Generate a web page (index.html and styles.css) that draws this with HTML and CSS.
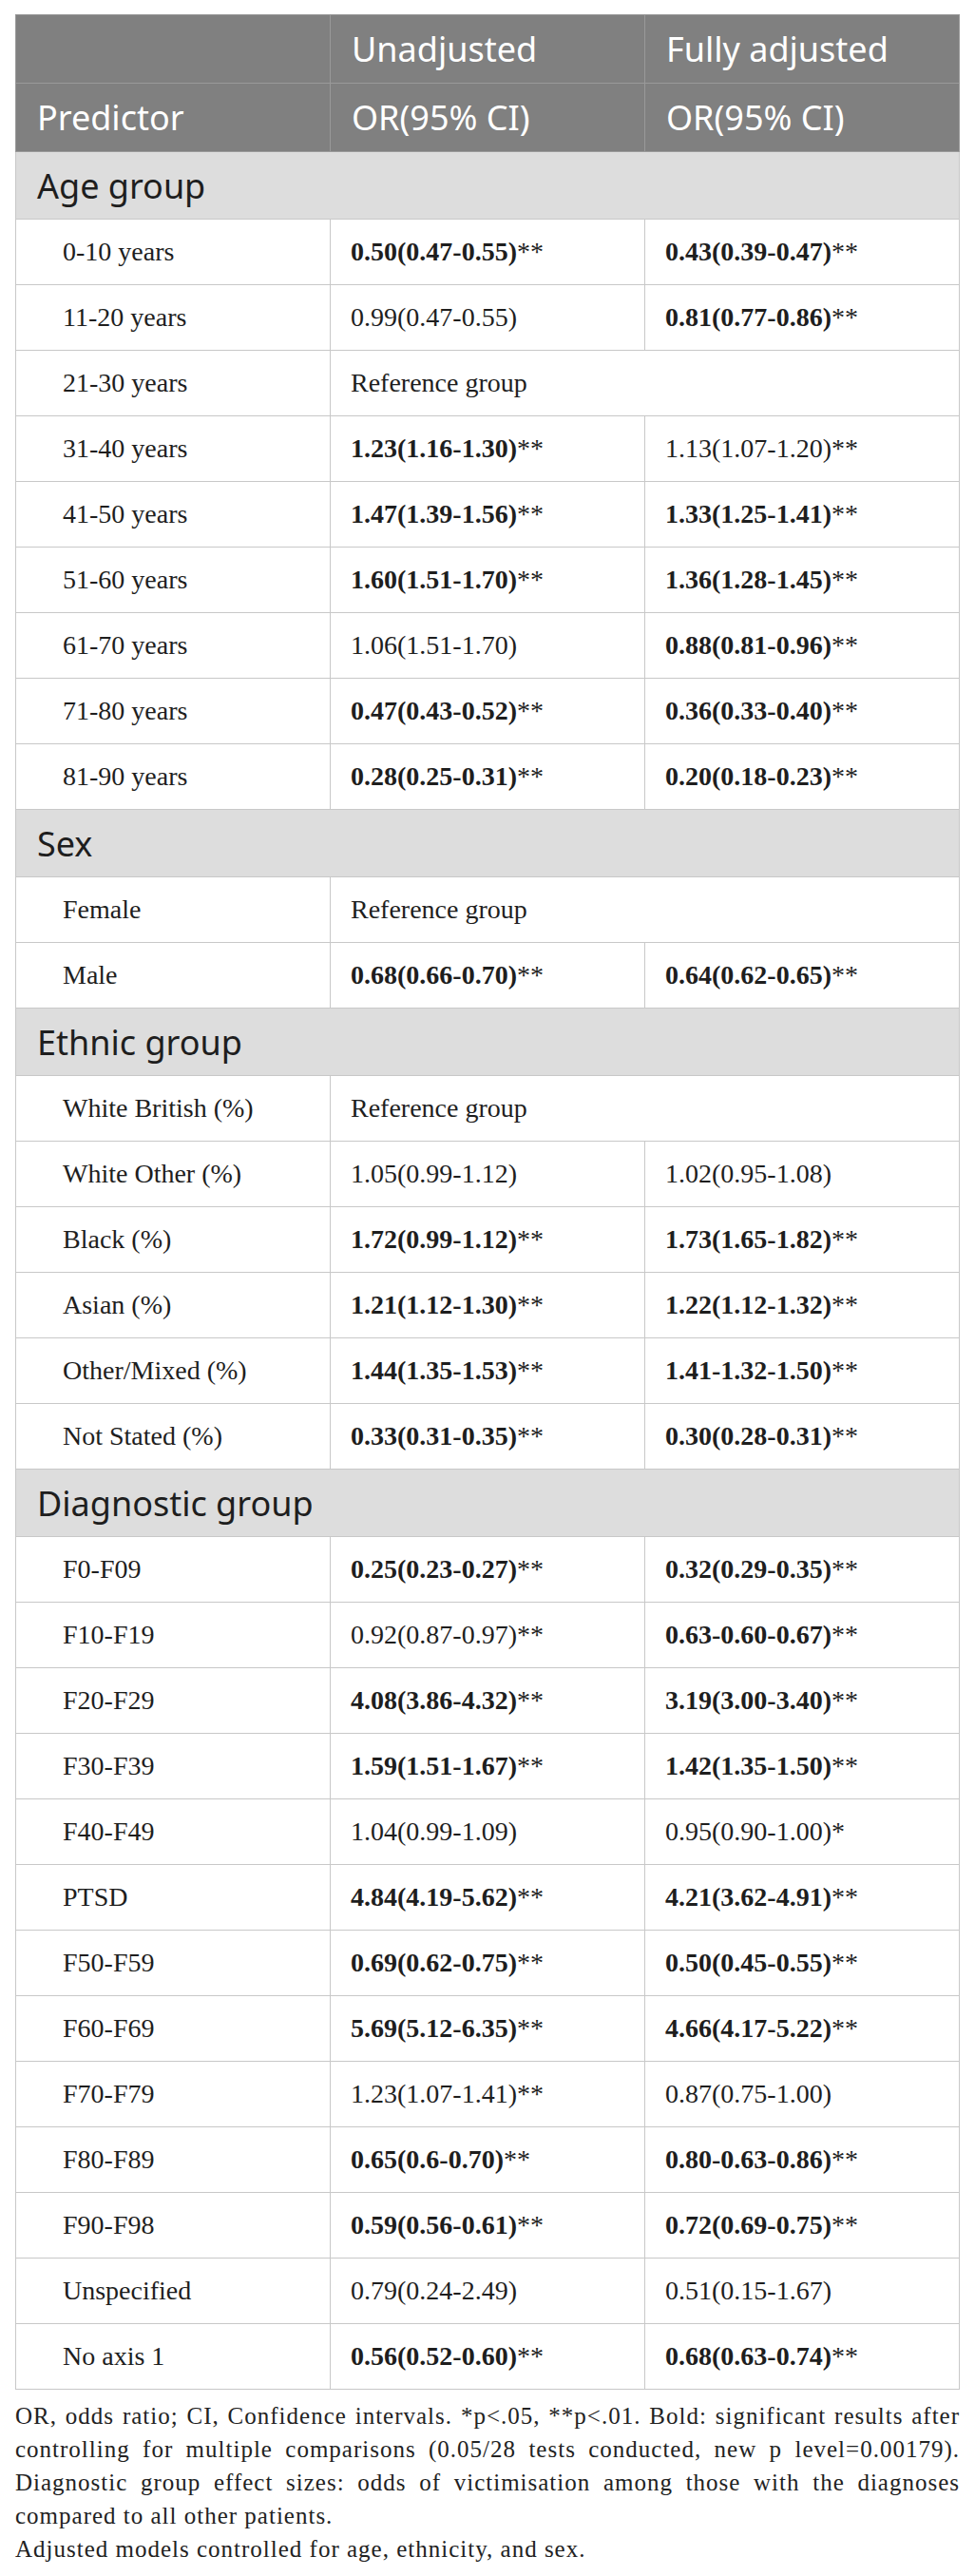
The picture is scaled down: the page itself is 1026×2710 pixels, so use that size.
FILE: index.html
```html
<html>
<head>
    <title>Victimisation odds ratios</title>
    <link rel="stylesheet" href="styles.css">
</head>
<body>
    <div class="page">
        <table class="or-table">
            <colgroup>
                <col class="col-pred">
                <col class="col-val">
                <col class="col-val">
            </colgroup>
            <thead>
                <tr class="head-row">
                    <th></th>
                    <th>Unadjusted</th>
                    <th>Fully adjusted</th>
                </tr>
                <tr class="head-row">
                    <th>Predictor</th>
                    <th>OR(95% CI)</th>
                    <th>OR(95% CI)</th>
                </tr>
            </thead>
            <tbody>
                <tr class="section"><td colspan="3">Age group</td></tr>
                <tr><td class="label">0-10 years</td><td><b>0.50(0.47-0.55)</b>**</td><td><b>0.43(0.39-0.47)</b>**</td></tr>
                <tr><td class="label">11-20 years</td><td>0.99(0.47-0.55)</td><td><b>0.81(0.77-0.86)</b>**</td></tr>
                <tr><td class="label">21-30 years</td><td colspan="2">Reference group</td></tr>
                <tr><td class="label">31-40 years</td><td><b>1.23(1.16-1.30)</b>**</td><td>1.13(1.07-1.20)**</td></tr>
                <tr><td class="label">41-50 years</td><td><b>1.47(1.39-1.56)</b>**</td><td><b>1.33(1.25-1.41)</b>**</td></tr>
                <tr><td class="label">51-60 years</td><td><b>1.60(1.51-1.70)</b>**</td><td><b>1.36(1.28-1.45)</b>**</td></tr>
                <tr><td class="label">61-70 years</td><td>1.06(1.51-1.70)</td><td><b>0.88(0.81-0.96)</b>**</td></tr>
                <tr><td class="label">71-80 years</td><td><b>0.47(0.43-0.52)</b>**</td><td><b>0.36(0.33-0.40)</b>**</td></tr>
                <tr><td class="label">81-90 years</td><td><b>0.28(0.25-0.31)</b>**</td><td><b>0.20(0.18-0.23)</b>**</td></tr>

                <tr class="section"><td colspan="3">Sex</td></tr>
                <tr><td class="label">Female</td><td colspan="2">Reference group</td></tr>
                <tr><td class="label">Male</td><td><b>0.68(0.66-0.70)</b>**</td><td><b>0.64(0.62-0.65)</b>**</td></tr>

                <tr class="section"><td colspan="3">Ethnic group</td></tr>
                <tr><td class="label">White British (%)</td><td colspan="2">Reference group</td></tr>
                <tr><td class="label">White Other (%)</td><td>1.05(0.99-1.12)</td><td>1.02(0.95-1.08)</td></tr>
                <tr><td class="label">Black (%)</td><td><b>1.72(0.99-1.12)</b>**</td><td><b>1.73(1.65-1.82)</b>**</td></tr>
                <tr><td class="label">Asian (%)</td><td><b>1.21(1.12-1.30)</b>**</td><td><b>1.22(1.12-1.32)</b>**</td></tr>
                <tr><td class="label">Other/Mixed (%)</td><td><b>1.44(1.35-1.53)</b>**</td><td><b>1.41-1.32-1.50)</b>**</td></tr>
                <tr><td class="label">Not Stated (%)</td><td><b>0.33(0.31-0.35)</b>**</td><td><b>0.30(0.28-0.31)</b>**</td></tr>

                <tr class="section"><td colspan="3">Diagnostic group</td></tr>
                <tr><td class="label">F0-F09</td><td><b>0.25(0.23-0.27)</b>**</td><td><b>0.32(0.29-0.35)</b>**</td></tr>
                <tr><td class="label">F10-F19</td><td>0.92(0.87-0.97)**</td><td><b>0.63-0.60-0.67)</b>**</td></tr>
                <tr><td class="label">F20-F29</td><td><b>4.08(3.86-4.32)</b>**</td><td><b>3.19(3.00-3.40)</b>**</td></tr>
                <tr><td class="label">F30-F39</td><td><b>1.59(1.51-1.67)</b>**</td><td><b>1.42(1.35-1.50)</b>**</td></tr>
                <tr><td class="label">F40-F49</td><td>1.04(0.99-1.09)</td><td>0.95(0.90-1.00)*</td></tr>
                <tr><td class="label">PTSD</td><td><b>4.84(4.19-5.62)</b>**</td><td><b>4.21(3.62-4.91)</b>**</td></tr>
                <tr><td class="label">F50-F59</td><td><b>0.69(0.62-0.75)</b>**</td><td><b>0.50(0.45-0.55)</b>**</td></tr>
                <tr><td class="label">F60-F69</td><td><b>5.69(5.12-6.35)</b>**</td><td><b>4.66(4.17-5.22)</b>**</td></tr>
                <tr><td class="label">F70-F79</td><td>1.23(1.07-1.41)**</td><td>0.87(0.75-1.00)</td></tr>
                <tr><td class="label">F80-F89</td><td><b>0.65(0.6-0.70)</b>**</td><td><b>0.80-0.63-0.86)</b>**</td></tr>
                <tr><td class="label">F90-F98</td><td><b>0.59(0.56-0.61)</b>**</td><td><b>0.72(0.69-0.75)</b>**</td></tr>
                <tr><td class="label">Unspecified</td><td>0.79(0.24-2.49)</td><td>0.51(0.15-1.67)</td></tr>
                <tr><td class="label">No axis 1</td><td><b>0.56(0.52-0.60)</b>**</td><td><b>0.68(0.63-0.74)</b>**</td></tr>
            </tbody>
        </table>

        <p class="note">OR, odds ratio; CI, Confidence intervals. *p&lt;.05, **p&lt;.01. Bold: significant results after controlling for multiple comparisons (0.05/28 tests conducted, new p level=0.00179). Diagnostic group effect sizes: odds of victimisation among those with the diagnoses compared to all other patients.</p>
        <p class="note">Adjusted models controlled for age, ethnicity, and sex.</p>
    </div>
</body>
</html>
```

FILE: styles.css
```css
* {
    margin: 0px;
    padding: 0px;
    box-sizing: border-box;
}

body
{
    background-color: #ffffff;
    color: #222222;
}

.page
{
    padding: 15px 16px 0px 16px;
}

.or-table
{
    width: 100%;
    border-collapse: collapse;
    table-layout: fixed;
}

.col-pred,
.col-val
{
    width: 33.33%;
}

.or-table th
{
    background-color: #808080;
    color: #ffffff;
    font-family: "Noto Sans", "Open Sans", sans-serif;
    font-size: 36px;
    font-weight: 400;
    text-align: left;
    padding: 0px 22px;
    height: 72px;
    border: 1px solid #999999;
}

.or-table td
{
    font-family: "Liberation Serif", "Times New Roman", serif;
    font-size: 28px;
    color: #1e1e1e;
    height: 69px;
    padding: 0px 21px;
    border: 1px solid #c8c8c8;
    vertical-align: middle;
}

.or-table td b
{
    font-weight: 700;
}

.or-table td.label
{
    padding-left: 49px;
}

.or-table tr.section td
{
    background-color: #dddddd;
    font-family: "Noto Sans", "Open Sans", sans-serif;
    font-size: 36px;
    color: #1e1e1e;
    height: 71px;
    padding-left: 22px;
}

.note
{
    font-family: "Liberation Serif", "Times New Roman", serif;
    font-size: 25px;
    letter-spacing: 1px;
    line-height: 35px;
    text-align: justify;
    color: #222222;
}

.or-table + .note
{
    margin-top: 10px;
}
```
